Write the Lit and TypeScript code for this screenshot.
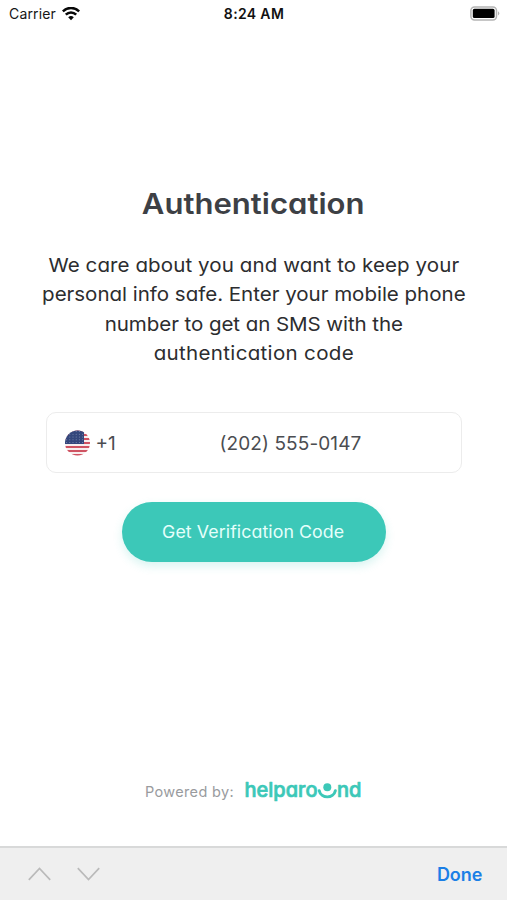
import { LitElement, html, css, svg } from "lit";
import { customElement } from "lit/decorators.js";

const STRIPES = Array.from({ length: 7 }, (_, i) => i);
const STARS = Array.from({ length: 30 }, (_, i) => ({ x: (i % 6) * 3.2 + 1.6, y: Math.floor(i / 6) * 2.7 + 1.6 }));

@customElement("status-bar")
export class StatusBar extends LitElement {
  static styles = css`
    :host { display: grid; grid-template-columns: 1fr auto 1fr; align-items: center; height: 27px; padding: 0 7px 0 9px; color: #161616; font-size: 14px; }
    .left { display: flex; align-items: center; gap: 6px; letter-spacing: 0.15px; }
    .time { font-weight: 600; letter-spacing: 0.35px; color: #111; margin-right: 1px; }
    .battery { justify-self: end; }
    svg { display: block; }
  `;
  render() {
    return html`
      <div class="left">
        <span>Carrier</span>
        <svg width="18" height="14" viewBox="0 0 18 14">
          <g fill="none" stroke="#080808" stroke-width="2.5">
            <path d="M0.8 4.4C5.4 -0.2 12.6 -0.2 17.2 4.4" />
            <path d="M3.8 7.7C6.8 4.7 11.2 4.7 14.2 7.7" />
          </g>
          <path d="M9 13.2L6.2 10.2Q9 8 11.8 10.2Z" fill="#080808" />
        </svg>
      </div>
      <span class="time">8:24 AM</span>
      <svg class="battery" width="30" height="15" viewBox="0 0 30 15">
        <rect x="0.9" y="0.9" width="25.6" height="13" rx="3.6" fill="#fff" stroke="#b4b4b4" stroke-width="1.5" />
        <rect x="2.8" y="2.8" width="21.8" height="9.2" rx="1.6" fill="#000" />
        <path d="M28 5.2Q30.6 7.4 28 9.6Z" fill="#b4b4b4" />
      </svg>
    `;
  }
}

@customElement("phone-field")
export class PhoneField extends LitElement {
  static styles = css`
    :host { display: flex; align-items: center; box-sizing: border-box; width: 416px; height: 61px; padding-left: 18px; border: 1.5px solid #ececec; border-radius: 10px; color: #4b4d51; font-size: 19px; background: #fff; }
    .flag { display: block; flex: none; }
    .prefix, .number { padding-top: 2px; }
    .prefix { width: 130px; padding-left: 6px; box-sizing: border-box; }
    .number { letter-spacing: 0.1px; }
  `;
  render() {
    return html`
      <svg class="flag" width="25" height="26" viewBox="0 0 25 26">
        <defs><clipPath id="disc"><circle cx="12.5" cy="13" r="12.5" /></clipPath></defs>
        <g clip-path="url(#disc)">
          <rect width="25" height="26" fill="#f8eeee" />
          ${STRIPES.map((i) => svg`<rect y=${i * 4} width="25" height="2" fill="#cf5362" />`)}
          <rect width="19" height="14" fill="#34467c" />
          ${STARS.map((s) => svg`<circle cx=${s.x} cy=${s.y} r="0.5" fill="#8390b4" />`)}
        </g>
      </svg>
      <span class="prefix">+1</span>
      <span class="number">(202) 555-0147</span>
    `;
  }
}

@customElement("brand-logo")
export class BrandLogo extends LitElement {
  static styles = css`
    :host { display: block; width: 117px; height: 26px; }
    svg { display: block; }
    .word { font-family: "Inter", sans-serif; font-feature-settings: "cv11"; font-size: 20.5px; font-weight: 500; fill: #3cc8b8; stroke: #3cc8b8; stroke-width: 0.7; stroke-linejoin: round; }
  `;
  render() {
    return html`<svg width="117" height="26" viewBox="0 0 117 26">
      <text class="word" x="-0.5" y="19.3" textLength="73" lengthAdjust="spacingAndGlyphs">helparo</text>
      <path d="M74.2 12.6C76 21 88.6 21 90.4 12.6" fill="none" stroke="#3cc8b8" stroke-width="2.9" stroke-linecap="round" />
      <circle cx="82.3" cy="9.3" r="4" fill="#3cc8b8" />
      <text class="word" x="92" y="19.3" textLength="24.5" lengthAdjust="spacingAndGlyphs">nd</text>
    </svg>`;
  }
}

@customElement("keyboard-bar")
export class KeyboardBar extends LitElement {
  static styles = css`
    :host { display: flex; align-items: center; box-sizing: border-box; height: 54px; padding: 0 24.5px 0 28px; border-top: 2px solid #d8d9d9; background: #efefef; }
    .arrows { display: flex; gap: 26px; flex: 1; }
    .arrows svg { display: block; fill: none; stroke: #bababa; stroke-width: 1.7; }
    .done { color: #1b7fe6; font-size: 18px; font-weight: 600; }
  `;
  render() {
    return html`
      <div class="arrows">
        <svg width="23" height="14" viewBox="0 0 23 14"><path d="M0.8 12.8L11.5 1.5L22.2 12.8" /></svg>
        <svg width="23" height="14" viewBox="0 0 23 14"><path d="M0.8 1.2L11.5 12.5L22.2 1.2" /></svg>
      </div>
      <span class="done">Done</span>
    `;
  }
}

@customElement("app-root")
export class AppRoot extends LitElement {
  static styles = css`
    :host { display: flex; flex-direction: column; height: 900px; overflow: hidden; background: #fff; font-family: "Inter", "Liberation Sans", sans-serif; white-space: nowrap; }
    .screen { flex: 1; display: flex; flex-direction: column; align-items: center; }
    h1, p, .button, .powered { font-feature-settings: "cv11"; }
    h1 { margin: 157px 0 0; font-size: 28.5px; line-height: 40px; font-weight: 600; color: #3d4045; transform: scaleX(1.09); }
    p { margin: 27px 0 0; font-size: 19.3px; line-height: 29.3px; text-align: center; color: #2c2d2f; }
    .line { display: block; transform: scaleX(1.065); }
    .l1 { letter-spacing: 0.08px; }
    .l2 { letter-spacing: -0.02px; }
    .l3 { letter-spacing: -0.07px; }
    .l4 { letter-spacing: 0.3px; }
    phone-field { margin-top: 44px; }
    .button { margin: 29px 0 0; width: 264px; height: 60px; border: 0; border-radius: 30px; background: #3cc8b8; color: #e6fffb; font-family: inherit; font-size: 17px; box-shadow: 0 4px 10px rgba(60, 200, 184, 0.2); }
    .label { display: inline-block; letter-spacing: 0.08px; transform: scaleX(1.045); }
    .footer { display: flex; align-items: center; gap: 11px; margin-top: auto; margin-bottom: 42px; }
    .powered { color: #999b9e; font-size: 14.5px; letter-spacing: 0.35px; }
  `;
  render() {
    return html`
      <status-bar></status-bar>
      <main class="screen">
        <h1>Authentication</h1>
        <p>
          <span class="line l1">We care about you and want to keep your</span>
          <span class="line l2">personal info safe. Enter your mobile phone</span>
          <span class="line l3">number to get an SMS with the</span>
          <span class="line l4">authentication code</span>
        </p>
        <phone-field></phone-field>
        <button class="button"><span class="label">Get Verification Code</span></button>
        <div class="footer"><span class="powered">Powered by:</span><brand-logo></brand-logo></div>
      </main>
      <keyboard-bar></keyboard-bar>
    `;
  }
}
